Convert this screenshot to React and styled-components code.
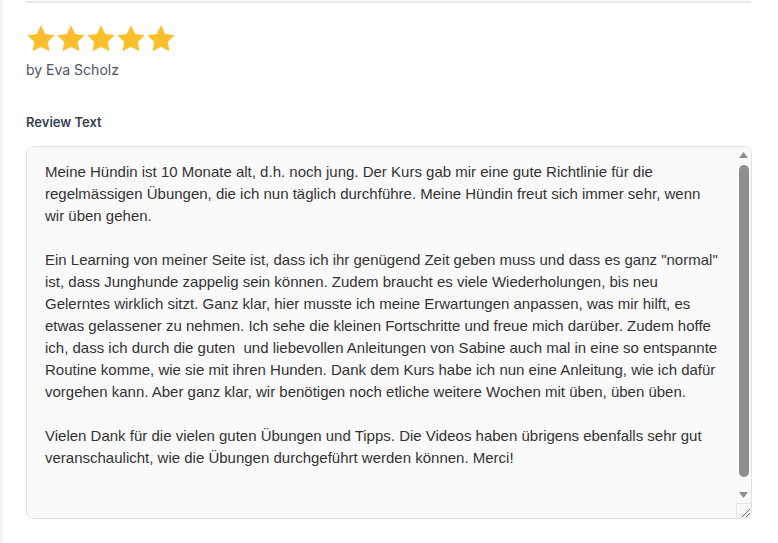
import React from "react";
import styled, { createGlobalStyle } from "styled-components";

const Global = createGlobalStyle`
  html, body { margin: 0; padding: 0; background: #ffffff; }
  body { font-family: Inter, "Noto Sans", sans-serif; }
  * { box-sizing: border-box; }
`;

const Page = styled.div`
  display: flex;
  min-height: 543px;
  background: #ffffff;
`;

const Strip = styled.div`
  width: 3px;
  flex: none;
  background: #f1f4f8;
`;

const Main = styled.div`
  flex: 1;
  display: flex;
  flex-direction: column;
  padding: 1px 26px 0 23px;
`;

const Divider = styled.div`
  height: 2px;
  background: #e5e7eb;
  margin-right: 1px;
`;

const Stars = styled.div`
  display: flex;
  margin-top: 21px;
  height: 30px;
`;

const Star = styled.svg`
  width: 30px;
  height: 30px;
  display: block;
  fill: #fbbf2b;
`;

const Author = styled.div`
  margin-top: 6px;
  font-size: 14px;
  line-height: 20px;
  color: #4b5563;
`;

const Label = styled.label`
  margin-top: 33px;
  font-size: 13px;
  line-height: 18px;
  font-weight: 600;
  color: #374151;
`;

const Field = styled.div`
  margin-top: 15px;
  display: flex;
  height: 373px;
  border: 1px solid #dfe3e8;
  border-radius: 8px;
  background: #fafafa;
  overflow: hidden;
`;

const TextArea = styled.textarea`
  flex: 1;
  min-width: 0;
  height: 100%;
  padding: 14px 16px 14px 18px;
  border: none;
  background: transparent;
  color: #333333;
  font-family: "Liberation Sans", Arial, sans-serif;
  font-size: 15px;
  line-height: 22px;
  overflow: hidden;
  outline: none;
  resize: none;
`;

const ScrollBar = styled.div`
  width: 15px;
  flex: none;
  display: flex;
  flex-direction: column;
  background: #fafafa;
`;

const Arrow = styled.div`
  height: 13px;
  flex: none;
  display: flex;
  justify-content: center;
  align-items: ${(p) => (p.$down ? "flex-start" : "flex-end")};
  padding: ${(p) => (p.$down ? "2px 0 0" : "0 0 2px")};
  svg { display: block; }
`;

const Track = styled.div`
  flex: 1;
  display: flex;
  justify-content: center;
  padding: 5px 0 13px 1px;
`;

const Thumb = styled.div`
  width: 10px;
  height: 100%;
  border-radius: 5px;
  background: #8f8f8f;
`;

const Corner = styled.div`
  height: 15px;
  flex: none;
  border-left: 1px solid #e3e6ea;
  border-top: 1px solid #e3e6ea;
  display: flex;
  align-items: flex-end;
  justify-content: flex-end;
  svg { display: block; }
`;

const text = `Meine Hündin ist 10 Monate alt, d.h. noch jung. Der Kurs gab mir eine gute Richtlinie für die regelmässigen Übungen, die ich nun täglich durchführe. Meine Hündin freut sich immer sehr, wenn wir üben gehen.

Ein Learning von meiner Seite ist, dass ich ihr genügend Zeit geben muss und dass es ganz "normal" ist, dass Junghunde zappelig sein können. Zudem braucht es viele Wiederholungen, bis neu Gelerntes wirklich sitzt. Ganz klar, hier musste ich meine Erwartungen anpassen, was mir hilft, es etwas gelassener zu nehmen. Ich sehe die kleinen Fortschritte und freue mich darüber. Zudem hoffe ich, dass ich durch die guten  und liebevollen Anleitungen von Sabine auch mal in eine so entspannte Routine komme, wie sie mit ihren Hunden. Dank dem Kurs habe ich nun eine Anleitung, wie ich dafür vorgehen kann. Aber ganz klar, wir benötigen noch etliche weitere Wochen mit üben, üben üben.

Vielen Dank für die vielen guten Übungen und Tipps. Die Videos haben übrigens ebenfalls sehr gut veranschaulicht, wie die Übungen durchgeführt werden können. Merci!`;

const StarIcon = () => (
  <Star viewBox="1 1 22 22" aria-hidden="true">
    <path d="M12 2l3.09 6.26L22 9.27l-5 4.87 1.18 6.88L12 17.77l-6.18 3.25L7 14.14 2 9.27l6.91-1.01L12 2z" />
  </Star>
);

export default function App() {
  return (
    <>
      <Global />
      <Page>
        <Strip />
        <Main>
          <Divider />
          <Stars>
            {[0, 1, 2, 3, 4].map((i) => (
              <StarIcon key={i} />
            ))}
          </Stars>
          <Author>by Eva Scholz</Author>
          <Label htmlFor="review">Review Text</Label>
          <Field>
            <TextArea id="review" defaultValue={text} />
            <ScrollBar aria-hidden="true">
              <Arrow>
                <svg width="9" height="6" viewBox="0 0 9 6">
                  <path d="M4.5 0L9 6H0z" fill="#8f8f8f" />
                </svg>
              </Arrow>
              <Track>
                <Thumb />
              </Track>
              <Arrow $down>
                <svg width="9" height="6" viewBox="0 0 9 6">
                  <path d="M0 0h9L4.5 6z" fill="#8f8f8f" />
                </svg>
              </Arrow>
              <Corner>
                <svg width="14" height="14" viewBox="0 0 14 14">
                  <path d="M13 5L5 13M13 9L9 13" stroke="#6b6b6b" strokeWidth="1" />
                </svg>
              </Corner>
            </ScrollBar>
          </Field>
        </Main>
      </Page>
    </>
  );
}
